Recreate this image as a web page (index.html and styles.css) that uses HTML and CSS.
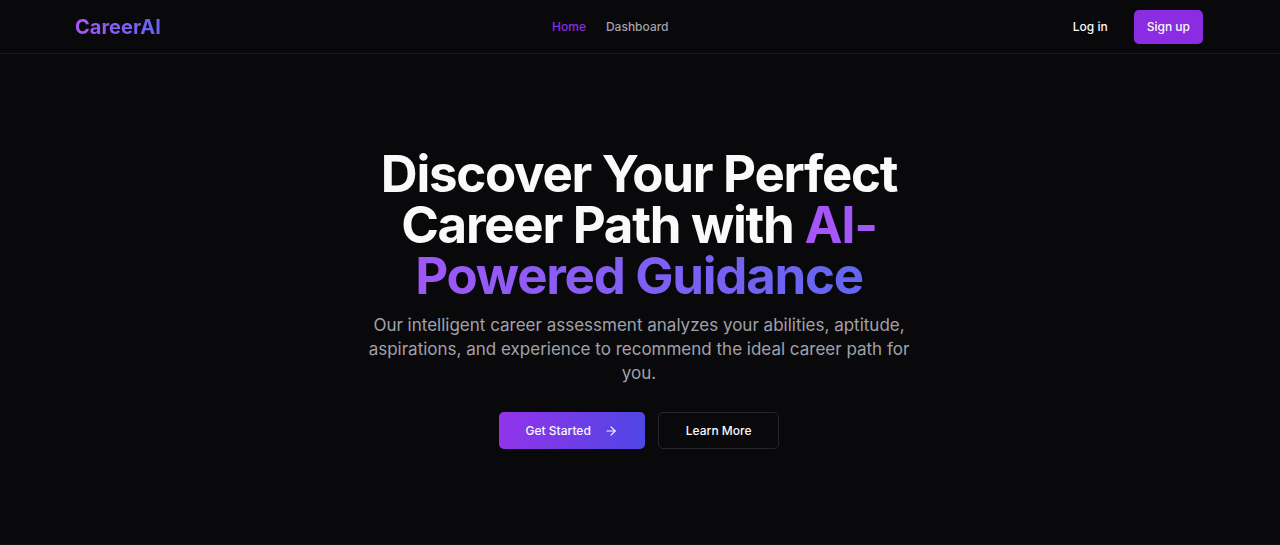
FILE: index.html
```html
<!DOCTYPE html>
<html lang="en">
<head>
  <meta charset="utf-8">
  <meta name="viewport" content="width=device-width, initial-scale=1">
  <title>CareerAI</title>
  <link rel="stylesheet" href="styles.css">
</head>
<body>
  <header class="site-header">
    <div class="header-inner">
      <a class="logo" href="#">CareerAI</a>
      <nav class="main-nav" aria-label="Main">
        <a class="nav-link nav-link-active" href="#" aria-current="page">Home</a>
        <a class="nav-link" href="#">Dashboard</a>
      </nav>
      <div class="header-actions">
        <button class="button button-ghost" type="button">Log in</button>
        <button class="button button-primary" type="button">Sign up</button>
      </div>
    </div>
  </header>
  <main class="hero">
    <h1 class="hero-title">Discover Your Perfect Career Path with <span class="gradient-text">AI-Powered Guidance</span></h1>
    <p class="hero-text">Our intelligent career assessment analyzes your abilities, aptitude, aspirations, and experience to recommend the ideal career path for you.</p>
    <div class="hero-actions">
      <button class="button button-large button-gradient" type="button">
        Get Started
        <svg class="arrow" viewBox="0 0 24 24" fill="none" stroke="currentColor" stroke-width="2" stroke-linecap="round" stroke-linejoin="round" aria-hidden="true"><path d="M5 12h14"/><path d="m12 5 7 7-7 7"/></svg>
      </button>
      <button class="button button-large button-outline" type="button">Learn More</button>
    </div>
  </main>
  <div class="muted-band"></div>
</body>
</html>
```

FILE: styles.css
```css
* {
  box-sizing: border-box;
}

body {
  display: flex;
  flex-direction: column;
  margin: 0;
  min-height: 100vh;
  background: #09090b;
  color: #fafafa;
  font-family: Inter, "Liberation Sans", sans-serif;
  font-size: 12px;
  line-height: 17px;
}

a {
  color: inherit;
  text-decoration: none;
}

.site-header {
  border-bottom: 1px solid #1b1b1e;
}

.header-inner {
  display: flex;
  align-items: center;
  justify-content: space-between;
  max-width: 1182px;
  min-height: 53px;
  margin: 0 auto;
  padding: 0 28px 0 26px;
}

.logo {
  background: linear-gradient(to right, #a855f7, #6366f1);
  background-clip: text;
  color: transparent;
  font-size: 20px;
  font-weight: 700;
  line-height: 24px;
}

.main-nav {
  display: flex;
  gap: 20px;
}

.nav-link {
  color: #a1a1aa;
  font-weight: 500;
}

.nav-link-active {
  color: #8b2be2;
}

.header-actions {
  display: flex;
  gap: 13px;
}

.button {
  display: inline-flex;
  align-items: center;
  justify-content: center;
  height: 34px;
  padding: 0 13px;
  border: 0;
  border-radius: 5px;
  background: transparent;
  color: #fafafa;
  font: inherit;
  font-weight: 500;
  cursor: pointer;
}

.button-primary {
  background: #8b2be2;
}

.hero {
  display: flex;
  flex-direction: column;
  align-items: center;
  padding: 94px 28px 95px 26px;
  text-align: center;
}

.hero-title {
  max-width: 542px;
  margin: 0;
  font-size: 51px;
  font-weight: 700;
  letter-spacing: -0.025em;
  line-height: 51px;
}

.gradient-text {
  background: linear-gradient(to right, #a855f7, #6366f1);
  background-clip: text;
  color: transparent;
}

.hero-text {
  max-width: 542px;
  margin: 12px 0 0;
  color: #a1a1aa;
  font-size: 17px;
  line-height: 24px;
}

.hero-actions {
  display: flex;
  flex-wrap: wrap;
  justify-content: center;
  gap: 13px;
  margin-top: 27px;
}

.button-large {
  height: 37px;
  padding: 0 27px;
}

.button-gradient {
  gap: 13px;
  background: linear-gradient(to right, #9333ea, #4f46e5);
}

.button-outline {
  border: 1px solid #27272a;
}

.arrow {
  width: 14px;
  height: 14px;
}

.muted-band {
  flex: 1;
  background: #131316;
}
```
